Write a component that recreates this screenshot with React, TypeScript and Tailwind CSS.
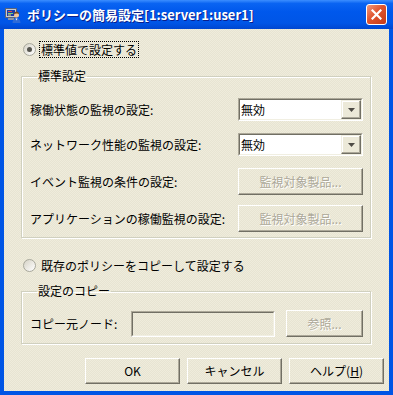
import React from 'react';

const font = "font-['Noto_Sans_CJK_JP','Noto_Sans',sans-serif]";

function Radio({ checked }: { checked?: boolean }) {
  return (
    <span className="flex h-[13px] w-[13px] items-center justify-center rounded-full border border-[#A8A89C] bg-[linear-gradient(135deg,#D6D3C6,#FFFFFF)]">
      {checked && <span className="h-[5px] w-[5px] rounded-full bg-[#55554E]" />}
    </span>
  );
}

function RaisedButton({
  children,
  disabled,
  className = '',
}: {
  children: React.ReactNode;
  disabled?: boolean;
  className?: string;
}) {
  return (
    <div
      className={`flex items-center justify-center border border-t-white border-l-white border-r-[#716F64] border-b-[#716F64] shadow-[inset_-1px_-1px_0_#ACA899] ${
        disabled ? 'text-[#ACA899] [text-shadow:1px_1px_0_#fff]' : 'text-black'
      } ${className}`}
    >
      {children}
    </div>
  );
}

function Combo({ value }: { value: string }) {
  return (
    <div className="flex h-[23px] w-[125px] border border-t-[#ACA899] border-l-[#ACA899] border-r-white border-b-white">
      <div className="flex flex-1 items-center border border-t-[#716F64] border-l-[#716F64] border-r-[#F1EFE2] border-b-[#F1EFE2] bg-white">
        <span className="flex-1 pl-[1px] leading-[16px]">{value}</span>
        <div className="flex h-full w-[20px] items-center justify-center border border-t-[#F1EFE2] border-l-[#F1EFE2] border-r-[#716F64] border-b-[#716F64] bg-[#ECE9D8] shadow-[inset_-1px_-1px_0_#ACA899,inset_1px_1px_0_#fff]">
          <svg width="7" height="4" viewBox="0 0 7 4">
            <path d="M0 0h7L3.5 4z" fill="#4D4B45" />
          </svg>
        </div>
      </div>
    </div>
  );
}

function TitleIcon() {
  return (
    <svg width="16" height="16" viewBox="0 0 16 16">
      <rect x="0.5" y="1.5" width="11" height="9" fill="#C8CCD4" stroke="#5A6478" />
      <rect x="2" y="3" width="8" height="6" fill="#1B3FA8" />
      <rect x="3" y="4" width="4" height="1" fill="#E0504A" />
      <rect x="3" y="6" width="5" height="1" fill="#7CD07A" />
      <rect x="3" y="7.5" width="3" height="1" fill="#F0D060" />
      <rect x="3" y="11" width="6" height="2" fill="#8C94A4" />
      <circle cx="11.5" cy="8" r="2.5" fill="#F2C59A" />
      <path d="M9 7.5c0-2 1.2-3 2.6-3s2.5 1 2.4 3c-.6-.8-1.4-1-2.4-1s-1.9.3-2.6 1z" fill="#7A4A20" />
      <path d="M7.5 16c0-3 1.8-5 4-5s4 2 4 5z" fill="#2F6BD8" />
      <path d="M10.5 11.5h2l-1 2z" fill="#fff" />
    </svg>
  );
}

export default function App() {
  return (
    <div className={`flex h-[395px] w-[393px] flex-col bg-[#0055E5] text-[12px] leading-[16px] text-black ${font}`}>
      {/* Title bar */}
      <div className="flex h-[29px] shrink-0 items-center bg-[linear-gradient(to_bottom,#3C8EFF_0%,#0A64F2_12%,#0058EC_40%,#0055E6_80%,#0046D0_100%)] pl-[5px] pr-[6px]">
        <TitleIcon />
        <span className="ml-[6px] flex-1 text-[13px] font-bold text-white [text-shadow:1px_1px_0_#0A1E8C]">
          ポリシーの簡易設定[1:server1:user1]
        </span>
        <div className="flex h-[21px] w-[21px] items-center justify-center rounded-[3px] border border-white bg-[linear-gradient(135deg,#F09A7E_0%,#E0542E_45%,#C63A16_100%)]">
          <svg width="11" height="11" viewBox="0 0 11 11">
            <path d="M1.5 1.5l8 8M9.5 1.5l-8 8" stroke="#fff" strokeWidth="2.2" strokeLinecap="square" />
          </svg>
        </div>
      </div>

      {/* Client area */}
      <div className="mx-[4px] mb-[4px] flex flex-1 flex-col bg-[#ECE9D8] bg-[repeating-conic-gradient(#EFECDC_0%_25%,#E7E4D2_0%_50%)] bg-[length:2px_2px]">
        <div className="mt-[12px] flex h-[17px] items-center pl-[19px]">
          <Radio checked />
          <span className="ml-[3px] border border-dotted border-black px-[1px] leading-[15px]">標準値で設定する</span>
        </div>

        <fieldset className="ml-[17px] mt-[10px] w-[350px] border border-[#D0D0BF] pb-[5px] pl-[8px] pr-[7px] shadow-[1px_1px_0_#fff,inset_1px_1px_0_#fff]">
          <legend className="ml-[7px] px-[1px] leading-[16px]">標準設定</legend>
          <div className="mt-[14px] flex h-[23px] items-center">
            <span className="flex-1">稼働状態の監視の設定:</span>
            <Combo value="無効" />
          </div>
          <div className="mt-[12px] flex h-[23px] items-center">
            <span className="flex-1">ネットワーク性能の監視の設定:</span>
            <Combo value="無効" />
          </div>
          <div className="mt-[12px] flex h-[27px] items-center">
            <span className="flex-1">イベント監視の条件の設定:</span>
            <RaisedButton disabled className="h-[27px] w-[125px]">
              監視対象製品...
            </RaisedButton>
          </div>
          <div className="mt-[10px] flex h-[27px] items-center">
            <span className="flex-1">アプリケーションの稼働監視の設定:</span>
            <RaisedButton disabled className="h-[27px] w-[125px]">
              監視対象製品...
            </RaisedButton>
          </div>
        </fieldset>

        <div className="mt-[19px] flex h-[17px] items-center pl-[19px]">
          <Radio />
          <span className="ml-[4px] px-[1px]">既存のポリシーをコピーして設定する</span>
        </div>

        <fieldset className="ml-[17px] mt-[9px] w-[350px] border border-[#D0D0BF] pb-[6px] pl-[8px] pr-[7px] shadow-[1px_1px_0_#fff,inset_1px_1px_0_#fff]">
          <legend className="ml-[7px] px-[1px] leading-[16px]">設定のコピー</legend>
          <div className="mt-[11px] flex h-[27px] items-center">
            <span className="w-[101px]">コピー元ノード:</span>
            <div className="h-[26px] w-[144px] border border-t-[#ACA899] border-l-[#ACA899] border-r-white border-b-white">
              <div className="h-full w-full border border-t-[#716F64] border-l-[#716F64] border-r-[#F1EFE2] border-b-[#F1EFE2]" />
            </div>
            <RaisedButton disabled className="ml-[11px] h-[27px] w-[77px]">
              参照...
            </RaisedButton>
          </div>
        </fieldset>

        <div className="mt-[14px] flex justify-end gap-[7px] pr-[5px]">
          <RaisedButton className="h-[26px] w-[95px]">OK</RaisedButton>
          <RaisedButton className="h-[26px] w-[95px]">キャンセル</RaisedButton>
          <RaisedButton className="h-[26px] w-[95px]">
            ヘルプ(<span className="underline">H</span>)
          </RaisedButton>
        </div>
      </div>
    </div>
  );
}
